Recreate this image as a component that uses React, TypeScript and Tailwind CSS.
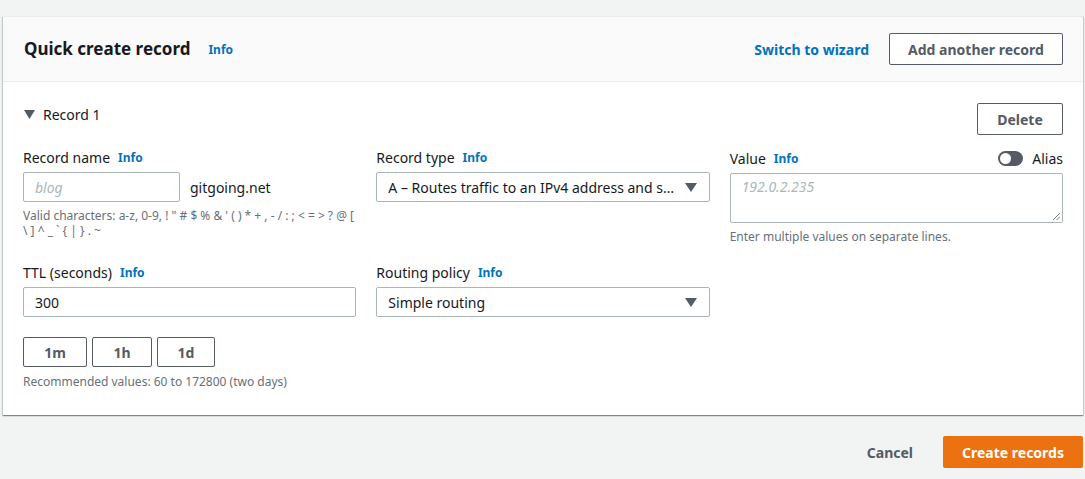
import type { ReactNode } from "react";

const font = { fontFamily: '"Noto Sans", "Open Sans", Arial, sans-serif' };

function Info() {
  return <span className="ml-2 text-[12px] font-bold text-[#0073bb]">Info</span>;
}

function Label({ children }: { children: ReactNode }) {
  return (
    <div className="flex h-5 items-center text-[14px] leading-5 text-[#16191f]">
      {children}
      <Info />
    </div>
  );
}

function Caret() {
  return (
    <svg width="12" height="9" viewBox="0 0 12 9" className="shrink-0">
      <path d="M0 0h12L6 9z" fill="#545b64" />
    </svg>
  );
}

function Select({ value }: { value: string }) {
  return (
    <div className="mt-[4px] flex h-[30px] items-center justify-between rounded-[2px] border border-[#aab7b8] bg-white pl-[11px] pr-[12px] text-[14px] text-[#16191f]">
      <span className="mr-[8px] truncate">{value}</span>
      <Caret />
    </div>
  );
}

const validChars = "Valid characters: a-z, 0-9, ! \" # $ % & ' ( ) * + , - / : ; < = > ? @ [ \\ ] ^ _ ` { | } . ~";

export default function App() {
  return (
    <div className="min-h-[479px] w-[1085px] bg-[#f2f3f3] pt-4" style={font}>
      <div className="ml-[3px] w-[1080px]">
        <div className="border-t border-[#eaeded] bg-white shadow-[0_1px_1px_0_rgba(0,28,36,0.3),1px_1px_1px_0_rgba(0,28,36,0.15),-1px_1px_1px_0_rgba(0,28,36,0.15)]">
          <header className="flex h-[65px] items-center justify-between border-b border-[#eaeded] bg-[#fafafa] pl-[21px] pr-[20px]">
            <div className="flex items-center">
              <h2 className="mt-[-1px] text-[17px] font-bold leading-6 text-[#16191f]">Quick create record</h2>
              <span className="ml-[18px] mt-[2px] text-[12px] font-bold text-[#0073bb]">Info</span>
            </div>
            <div className="flex items-center">
              <span className="mr-[20px] text-[14px] font-bold text-[#0073bb]">Switch to wizard</span>
              <button className="h-[32px] w-[174px] rounded-[2px] border border-[#545b64] bg-white text-[14px] font-bold text-[#545b64]">
                Add another record
              </button>
            </div>
          </header>

          <div className="px-[20px] pb-[26px] pt-[21px]">
            <div className="flex items-start justify-between">
              <div className="mt-[1px] flex h-5 items-center pl-[1px] text-[14px] text-[#16191f]">
                <svg width="11" height="9" viewBox="0 0 11 9" className="mr-[8px]">
                  <path d="M0 0h11L5.5 9z" fill="#545b64" />
                </svg>
                Record 1
              </div>
              <button className="h-[32px] w-[86px] rounded-[2px] border border-[#545b64] bg-white text-[14px] font-bold text-[#545b64]">
                Delete
              </button>
            </div>

            <div className="mt-[13px] grid grid-cols-3 gap-x-[20px]">
              <div>
                <Label>Record name</Label>
                <div className="mt-[4px] flex items-center">
                  <div className="flex h-[30px] w-[157px] items-center rounded-[2px] border border-[#aab7b8] pl-[11px] text-[14px] italic text-[#aab7b8]">
                    blog
                  </div>
                  <span className="ml-[10px] text-[14px] text-[#16191f]">gitgoing.net</span>
                </div>
                <p className="mt-[6px] text-[12px] leading-[15px] text-[#687078]">{validChars}</p>
              </div>
              <div>
                <Label>Record type</Label>
                <Select value="A – Routes traffic to an IPv4 address and some AWS resources" />
              </div>
              <div>
                <div className="flex items-center justify-between">
                  <Label>Value</Label>
                  <div className="flex items-center">
                    <div className="flex h-[15px] w-[25px] items-center rounded-full bg-[#545b64] pl-[2px]">
                      <div className="h-[11px] w-[11px] rounded-full bg-white" />
                    </div>
                    <span className="ml-[9px] text-[14px] text-[#16191f]">Alias</span>
                  </div>
                </div>
                <div className="relative mt-[4px] h-[50px] rounded-[2px] border border-[#aab7b8] pl-[11px] pt-[2px] text-[14px] italic text-[#aab7b8]">
                  192.0.2.235
                  <svg width="7" height="7" viewBox="0 0 7 7" className="absolute bottom-[2px] right-[2px]">
                    <path d="M7 0L0 7M7 3.5L3.5 7" stroke="#777" strokeWidth="1" />
                  </svg>
                </div>
                <p className="mt-[6px] text-[12px] leading-[15px] text-[#687078]">Enter multiple values on separate lines.</p>
              </div>
            </div>

            <div className="mt-[19px] grid grid-cols-3 gap-x-[20px]">
              <div>
                <Label>TTL (seconds)</Label>
                <div className="mt-[4px] flex h-[30px] items-center rounded-[2px] border border-[#aab7b8] pl-[11px] text-[14px] text-[#16191f]">
                  300
                </div>
                <div className="mt-[20px] flex gap-[5px]">
                  {[
                    ["1m", "w-[64px]"],
                    ["1h", "w-[60px]"],
                    ["1d", "w-[58px]"],
                  ].map(([t, w]) => (
                    <button
                      key={t}
                      className={`${w} h-[30px] rounded-[2px] border border-[#545b64] bg-white text-[14px] font-bold text-[#545b64]`}
                    >
                      {t}
                    </button>
                  ))}
                </div>
                <p className="mt-[7px] text-[12px] leading-[15px] text-[#687078]">Recommended values: 60 to 172800 (two days)</p>
              </div>
              <div>
                <Label>Routing policy</Label>
                <Select value="Simple routing" />
              </div>
              <div />
            </div>
          </div>
        </div>

        <div className="mt-[21px] flex items-center justify-end">
          <span className="mr-[30px] text-[14px] font-bold text-[#545b64]">Cancel</span>
          <button className="h-[32px] w-[140px] rounded-[2px] bg-[#ec7211] text-[14px] font-bold text-white">Create records</button>
        </div>
      </div>
    </div>
  );
}
